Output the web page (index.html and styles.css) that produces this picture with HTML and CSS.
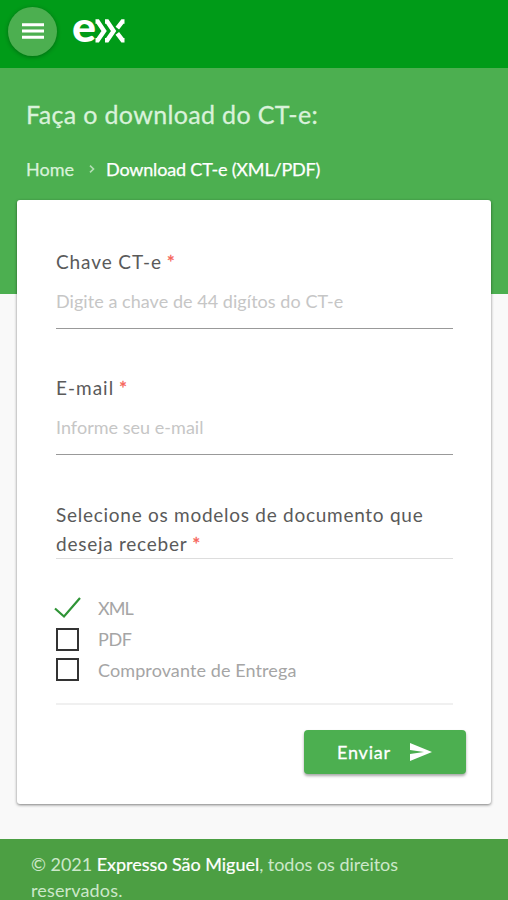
FILE: index.html
```html
<!DOCTYPE html>
<html lang="pt-BR">
<head>
<meta charset="utf-8">
<meta name="viewport" content="width=device-width, initial-scale=1">
<title>Download CT-e</title>
<link rel="stylesheet" href="styles.css">
</head>
<body>
<header class="topbar">
  <button class="menu" aria-label="Menu">
    <svg width="22" height="16" viewBox="0 0 22 16"><path d="M0 1.8h22M0 8h22M0 14.2h22" stroke="#fff" stroke-width="3"/></svg>
  </button>
  <svg class="logo" width="56" height="60" viewBox="-2 -14 56 60" role="img">
    <text class="logo-letter" x="-1" y="26.5" textLength="24" lengthAdjust="spacingAndGlyphs">e</text>
    <g fill="none" stroke="#fff" stroke-width="4.4">
      <path d="M22.5 6.5h2.2L31.1 16l-6.4 9.2h-2.2"/>
      <path d="M32 6.5h2.2L40.6 16l-6.4 9.2H32"/>
      <path d="M51.5 6.5h-2l-5.2 6.6M44.3 18.4l5.2 6.8h2"/>
    </g>
  </svg>
</header>
<main class="page">
  <section class="intro">
    <h1 class="title">Faça o download do CT-e:</h1>
    <nav class="crumbs">
      <span class="home">Home</span>
      <svg class="sep" width="6" height="8" viewBox="0 0 6 8"><path d="M1 .7 4.5 4 1 7.3" fill="none" stroke="#b4deb5" stroke-width="1.6"/></svg>
      <span class="current">Download CT-e (XML/PDF)</span>
    </nav>
  </section>
  <form class="card">
    <label class="label" for="chave"><span class="chave">Chave CT-e</span> <span class="req">*</span></label>
    <input class="field field-chave" id="chave" placeholder="Digite a chave de 44 digítos do CT-e">
    <label class="label" for="email"><span class="email">E-mail</span> <span class="req">*</span></label>
    <input class="field field-email" id="email" placeholder="Informe seu e-mail">
    <p class="label models"><span class="line-one">Selecione os modelos de documento que</span><br><span class="line-two">deseja receber</span> <span class="req">*</span></p>
    <div class="options">
      <div class="option"><svg class="tick" width="28" height="22" viewBox="0 0 28 22"><path d="m1 11.5 9 8L26 1" fill="none" stroke="#2f9436" stroke-width="2.2"/></svg><span class="xml">XML</span></div>
      <div class="option"><span class="box"></span><span class="pdf">PDF</span></div>
      <div class="option"><span class="box"></span><span class="proof">Comprovante de Entrega</span></div>
    </div>
    <button class="send" type="button"><span class="send-text">Enviar</span><svg width="22" height="18" viewBox="0 0 22 18"><path d="M0 0v7l14 2-14 2v7l22-9z" fill="#fff"/></svg></button>
  </form>
</main>
<footer class="footer"><span class="copy">© 2021 <span class="company">Expresso São Miguel</span>, todos os direitos</span><br><span class="reserved">reservados.</span></footer>
</body>
</html>
```
FILE: styles.css
```css
* { box-sizing: border-box; }
body { margin: 0; height: 900px; overflow: hidden; background: #f9f9f9; font: 18px/24px Lato, "Noto Sans", sans-serif; }
button { border: 0; padding: 0; font: inherit; }
.topbar { display: flex; align-items: center; height: 68px; padding: 0 8px 6px; background: #009b18; }
.menu { display: flex; align-items: center; justify-content: center; width: 49px; height: 49px; border-radius: 50%; background: #4caf50; box-shadow: 0 1px 4px rgba(0,0,0,.3); }
.logo { margin-left: 14px; }
.logo-letter { fill: #fff; font-size: 42px; font-weight: 900; }
.page { height: 771px; background: linear-gradient(#4caf50 226px, #f9f9f9 226px); }
.intro { height: 132px; padding: 30px 26px 0; }
.title { margin: 0; color: #d9f2da; font-size: 25px; font-weight: 400; line-height: 32px; letter-spacing: .34px; white-space: nowrap; -webkit-text-stroke: .3px; }
.crumbs { display: flex; align-items: center; margin-top: 27px; color: #d9f2da; white-space: nowrap; }
.home { width: 63px; -webkit-text-stroke: .25px; }
.sep { margin-right: 11px; }
.current { color: #fff; letter-spacing: -.18px; -webkit-text-stroke: .25px; }
.card { display: flex; flex-direction: column; width: 474px; height: 604px; margin: 0 17px; padding: 47px 39px 0; background: #fff; border-radius: 3px; box-shadow: 0 1px 3px rgba(0,0,0,.5); }
.label { height: 30px; margin: 0; color: #5a5a5a; font-size: 19px; line-height: 30px; white-space: nowrap; }
.chave { letter-spacing: .9px; }
.email { letter-spacing: 1px; }
.line-one { letter-spacing: .73px; }
.line-two { letter-spacing: .75px; }
.req { color: #f66257; -webkit-text-stroke: .3px; }
.field { width: 397px; height: 52px; margin: 0 0 44px; padding: 0 0 4px; border: 0; border-bottom: 1px solid #999; background: none; font: 18px/24px Lato, sans-serif; outline: 0; }
.field::placeholder { color: #c6c6c6; opacity: 1; }
.field-chave { letter-spacing: .05px; }
.field-email { letter-spacing: .03px; margin-bottom: 45px; }
.models { width: 397px; height: 59px; line-height: 29px; border-bottom: 1px solid #ddd; }
.options { width: 397px; height: 146px; padding-top: 34px; border-bottom: 2px solid #f0f0f0; }
.option { display: flex; align-items: center; height: 30.7px; color: #a5a5a5; }
.xml { letter-spacing: -1px; }
.pdf { letter-spacing: -.4px; }
.proof { letter-spacing: .1px; }
.box { width: 23px; height: 23px; margin-right: 19px; border: 2px solid #333; }
.tick { margin: 0 16px 0 -2px; }
.send { display: flex; align-items: center; justify-content: space-between; width: 162px; height: 44px; margin: 25px 0 0 248px; padding: 0 34px 0 33px; flex: none; border-radius: 4px; color: #fff; background: #4caf50; box-shadow: 0 2px 3px rgba(0,0,0,.35); }
.send-text { letter-spacing: .8px; -webkit-text-stroke: .3px; }
.footer { height: 61px; padding: 12px 31px 0; background: #4c9f43; color: #cce8ca; line-height: 26px; white-space: nowrap; }
.copy { letter-spacing: -.03px; }
.reserved { letter-spacing: .15px; }
.company { color: #fff; -webkit-text-stroke: .2px; }
```
